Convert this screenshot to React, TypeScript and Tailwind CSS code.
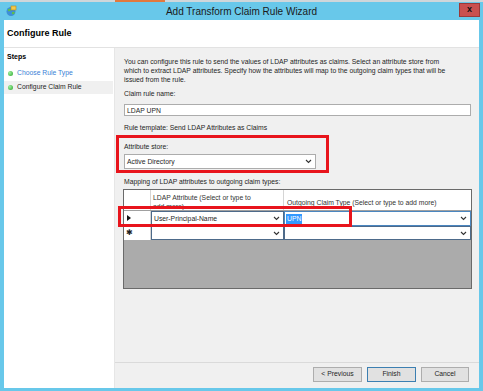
import React from "react";

const Chevron = () => (
  <svg width="7" height="5" viewBox="0 0 7 5" className="shrink-0">
    <path d="M1 1 L3.5 3.5 L6 1" fill="none" stroke="#333" strokeWidth="1.1" />
  </svg>
);

const Dot = () => (
  <span className="inline-block w-[5px] h-[5px] rounded-full bg-[radial-gradient(circle_at_35%_35%,#9ff09f,#2aa52a)] shrink-0" />
);

export default function App() {
  return (
    <div
      className="w-[483px] h-[391px] bg-[#68c8ea] flex flex-col overflow-hidden text-[#1e1e1e]"
      style={{ fontFamily: '"Liberation Sans", Arial, sans-serif' }}
    >
      {/* top strip */}
      <div className="h-[2px] flex">
        <div className="w-[115px] bg-[#cfd6da]" />
        <div className="w-[50px] bg-[#e2793e]" />
        <div className="flex-1 bg-[#cfd6da]" />
      </div>
      {/* title bar */}
      <div className="h-[18px] flex items-center">
        <div className="w-[24px] pl-[5px] flex items-center">
          <svg width="12" height="12" viewBox="0 0 12 12">
            <circle cx="6" cy="6.5" r="4.5" fill="#3d8fd8" />
            <path d="M3 4 Q5 3 6 5 Q5 7 3 6 Z" fill="#5cc04a" />
            <path d="M7 7 Q9 6 10 8 Q8 10 7 9 Z" fill="#5cc04a" />
            <rect x="6" y="1" width="5" height="4" fill="#f2c94c" stroke="#b68a1c" strokeWidth="0.6" />
          </svg>
        </div>
        <div className="flex-1 text-center text-[10px] text-[#1a1a1a]">
          Add Transform Claim Rule Wizard
        </div>
        <div className="w-[24px] flex">
          <div className="w-[21px] h-[14px] -mt-[2px] bg-[#c9504f] border border-[#9a3a3a] flex items-center justify-center text-[9px] font-bold text-[#111]">
            x
          </div>
        </div>
      </div>
      {/* window content */}
      <div className="flex-1 mx-[4px] mb-[3px] bg-white flex flex-col">
        <div className="h-[28px] border-b border-[#e2e2e2] flex items-center pl-[3px]">
          <span className="text-[9px] font-bold text-black">Configure Rule</span>
        </div>
        <div className="flex-1 flex">
          {/* left steps */}
          <div className="w-[111px] bg-white border-r border-[#e6e6e6] flex flex-col pt-[3px]">
            <div className="h-[12px] flex items-center pl-[3px] text-[7px] font-bold text-black">Steps</div>
            <div className="h-[14px] mt-[3px] flex items-center pl-[4px] gap-[4px] text-[6.8px] text-[#3b7fd6]">
              <Dot />
              <span>Choose Rule Type</span>
            </div>
            <div className="h-[13px] mt-[1px] mr-[1px] flex items-center pl-[4px] gap-[4px] text-[6.8px] bg-[#f0f0f0] text-[#1e1e1e]">
              <Dot />
              <span>Configure Claim Rule</span>
            </div>
          </div>
          {/* right panel */}
          <div className="flex-1 bg-[#f0f0f0] flex flex-col">
            <div className="flex-1 flex flex-col pl-[9px] pt-[9px] text-[6.8px] leading-[9px] text-[#1e1e1e]">
              <div className="whitespace-nowrap">
                You can configure this rule to send the values of LDAP attributes as claims. Select an attribute store from
                <br />
                which to extract LDAP attributes. Specify how the attributes will map to the outgoing claim types that will be
                <br />
                issued from the rule.
              </div>
              <div className="mt-[5px]">Claim rule name:</div>
              <div className="mt-[6px] w-[347px] h-[12px] bg-white border border-[#acacac] flex items-center pl-[2px]">
                LDAP UPN
              </div>
              <div className="mt-[7px]">Rule template: Send LDAP Attributes as Claims</div>
              <div className="mt-[3px] -ml-[8px] w-[213px] h-[38px] border-[3px] border-[#e8141c] pl-[5px] pt-[4px]">
                <div>Attribute store:</div>
                <div className="mt-[3px] w-[192px] h-[15px] bg-white border border-[#acacac] flex items-center justify-between pl-[2px] pr-[3px]">
                  <span>Active Directory</span>
                  <Chevron />
                </div>
              </div>
              <div className="mt-[4px]">Mapping of LDAP attributes to outgoing claim types:</div>
              {/* grid */}
              <div className="relative mt-[3px] -ml-[1px] w-[349px] h-[100px] border border-[#6a6a6a] bg-[#ababab] flex flex-col">
                <div className="h-[21px] flex bg-white border-b border-[#a0a0a0] overflow-hidden">
                  <div className="w-[27px] border-r border-[#d5d5d5]" />
                  <div className="w-[133px] h-[20px] overflow-hidden border-r border-[#d5d5d5] pl-[2px] pt-[3px] leading-[9px] text-[#333]">
                    LDAP Attribute (Select or type to
                    <br />
                    add more)
                  </div>
                  <div className="flex-1 pl-[3px] flex items-center pt-[4px] text-[#333] whitespace-nowrap">
                    Outgoing Claim Type (Select or type to add more)
                  </div>
                </div>
                <div className="h-[15px] flex bg-white">
                  <div className="w-[27px] border-r border-b border-[#d5d5d5] flex items-center pl-[3px]">
                    <svg width="4" height="6" viewBox="0 0 4 6">
                      <path d="M0 0 L4 3 L0 6 Z" fill="#111" />
                    </svg>
                  </div>
                  <div className="w-[133px] border border-[#4d6a8a] flex items-center justify-between pl-[2px] pr-[3px]">
                    <span>User-Principal-Name</span>
                    <Chevron />
                  </div>
                  <div className="flex-1 border border-[#4a86c0] flex items-center justify-between pl-[1px] pr-[3px]">
                    <span className="bg-[#3399ff] text-white px-[1px] leading-[10px]">UPN</span>
                    <Chevron />
                  </div>
                </div>
                <div className="h-[14px] flex bg-white">
                  <div className="w-[27px] border-r border-[#d5d5d5] flex items-center pl-[2px] text-[8px] leading-[8px]">
                    ✱
                  </div>
                  <div className="w-[133px] border border-[#4d6a8a] flex items-center justify-end pr-[3px]">
                    <Chevron />
                  </div>
                  <div className="flex-1 border border-[#4d6a8a] flex items-center justify-end pr-[3px]">
                    <Chevron />
                  </div>
                </div>
                <div className="absolute left-[-6px] top-[16px] w-[234px] h-[21px] border-[3px] border-[#e8141c]" />
              </div>
            </div>
            <div className="h-[26px] border-t border-[#dadada] flex justify-end items-start pt-[4px] pr-[10px] gap-[5px] text-[6.8px]">
              <div className="w-[49px] h-[15px] bg-[#e1e1e1] border border-[#adadad] flex items-center justify-center">
                &lt; Previous
              </div>
              <div className="w-[49px] h-[15px] bg-[#e1e1e1] border border-[#3c7fb1] flex items-center justify-center">
                Finish
              </div>
              <div className="w-[48px] h-[15px] bg-[#e1e1e1] border border-[#adadad] flex items-center justify-center">
                Cancel
              </div>
            </div>
          </div>
        </div>
      </div>
    </div>
  );
}
